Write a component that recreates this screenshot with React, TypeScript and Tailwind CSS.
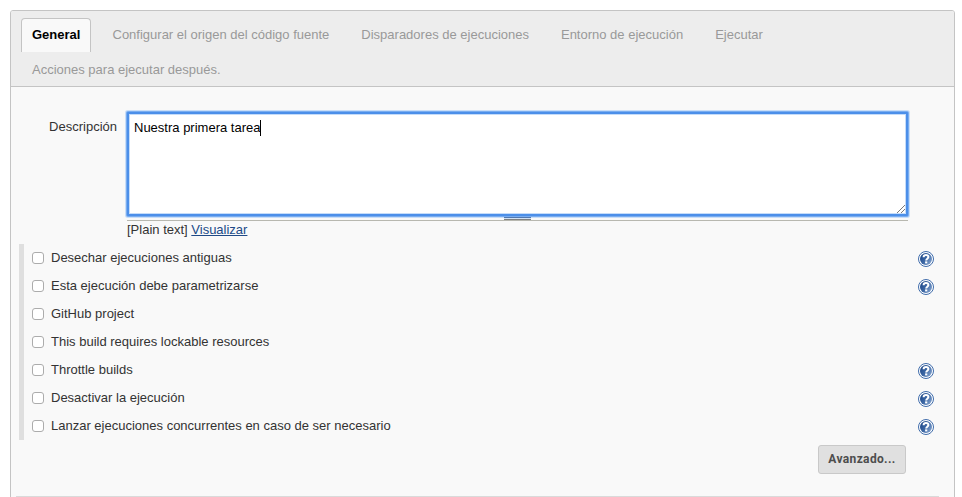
import React from "react";

const tabs = [
  "Configurar el origen del código fuente",
  "Disparadores de ejecuciones",
  "Entorno de ejecución",
  "Ejecutar",
];

const options = [
  { label: "Desechar ejecuciones antiguas", help: true },
  { label: "Esta ejecución debe parametrizarse", help: true },
  { label: "GitHub project", help: false },
  { label: "This build requires lockable resources", help: false },
  { label: "Throttle builds", help: true },
  { label: "Desactivar la ejecución", help: true },
  { label: "Lanzar ejecuciones concurrentes en caso de ser necesario", help: true },
];

function HelpIcon() {
  return (
    <svg className="mt-px mr-[3px] h-4 w-4" viewBox="0 0 16 16" aria-label="Ayuda">
      <defs>
        <linearGradient id="helpFill" x1="0" y1="0.2" x2="1" y2="0.8">
          <stop offset="0" stopColor="#1c4687" />
          <stop offset="0.5" stopColor="#3d68a5" />
          <stop offset="1" stopColor="#86a5cf" />
        </linearGradient>
      </defs>
      <circle cx="8" cy="8" r="7.5" fill="#fff" stroke="#3f6cab" strokeWidth="1" />
      <circle cx="8" cy="8" r="6" fill="url(#helpFill)" />
      <path
        d="M5.6 6.2C5.6 4.7 6.6 4 8 4s2.4.8 2.4 2.1c0 1.6-2.2 1.6-2.2 3.3"
        fill="none"
        stroke="#fff"
        strokeWidth="2"
      />
      <rect x="7.1" y="10.4" width="2.2" height="2" fill="#fff" />
    </svg>
  );
}

export default function App() {
  return (
    <div className="h-[497px] w-[962px] overflow-hidden bg-white pt-[10px] pl-[10px] font-['Liberation_Sans',Arial,sans-serif] text-[13px] leading-4 text-[#333]">
      <main className="h-[520px] w-[945px] rounded-t-[3px] border border-[#c4c4c4] bg-[#f9f9f9]">
        <nav className="h-[76px] rounded-t-[2px] border-b border-[#c4c4c4] bg-[#ededed] pt-[7px] pl-[10px] text-[#999]">
          <div className="flex h-[35px]">
            <div className="mr-[11.5px] h-[34px] w-[70px] rounded-t-[4px] border border-b-0 border-[#c4c4c4] bg-[#f9f9f9] pt-2 pl-[10px] font-bold text-black">
              General
            </div>
            {tabs.map((tab) => (
              <div key={tab} className="mr-3 px-[10px] pt-[9px] whitespace-nowrap">
                {tab}
              </div>
            ))}
          </div>
          <div className="pt-[9px] pl-[11px]">Acciones para ejecutar después.</div>
        </nav>

        <section className="flex h-[157px] pt-[25px]">
          <div className="w-[106px] pt-[7px] text-right">Descripción</div>
          <div className="ml-[10px] w-[781px]">
            <div className="relative h-[104px] rounded-[1px] border-2 border-[#4c8fe9] bg-white pt-[6px] pl-[5px] text-black shadow-[0_0_0_1px_#79adf0,0_0_0_2px_#c9def8,inset_0_0_0_1px_#c5dcf9]">
              <span className="border-r border-black pb-px">Nuestra primera tarea</span>
              <svg className="absolute right-px bottom-px h-2 w-2" viewBox="0 0 8 8">
                <path d="M0 8L8 0M4 8L8 4" stroke="#555" strokeWidth="0.8" />
              </svg>
            </div>
            <div className="flex h-[5px] justify-center border-b border-[#b8b8b0] pt-[1px]">
              <div className="z-10 h-[3px] w-[27px] border-t border-b border-t-[#5078b0] border-b-[#808080] bg-[#d0e1f5]" />
            </div>
            <div className="pt-px text-[#333]">
              [Plain text] <a className="text-[#204a87] underline">Visualizar</a>
            </div>
          </div>
        </section>

        <section className="ml-2 h-[196px] w-[918px] border-l-[5px] border-[#dfdfdf]">
          {options.map(({ label, help }) => (
            <div key={label} className="flex h-7 items-center">
              <span className="ml-2 h-3 w-3 rounded-[3px] border border-[#acacac] bg-white" />
              <span className="ml-[7px] flex-1">{label}</span>
              {help && <HelpIcon />}
            </div>
          ))}
        </section>

        <div className="flex h-[56px] justify-end pt-[5px] pr-[48px]">
          <button className="h-[29px] w-[88px] rounded-[3px] border border-[#c9c9c9] bg-[#e0e0e0] pb-[2px] font-['Roboto',sans-serif] text-[12px] font-bold tracking-[0.35px] text-[#4d4d4d]">
            Avanzado...
          </button>
        </div>
        <div className="ml-[5px] w-[923px] border-t border-[#dadada]" />
      </main>
    </div>
  );
}
